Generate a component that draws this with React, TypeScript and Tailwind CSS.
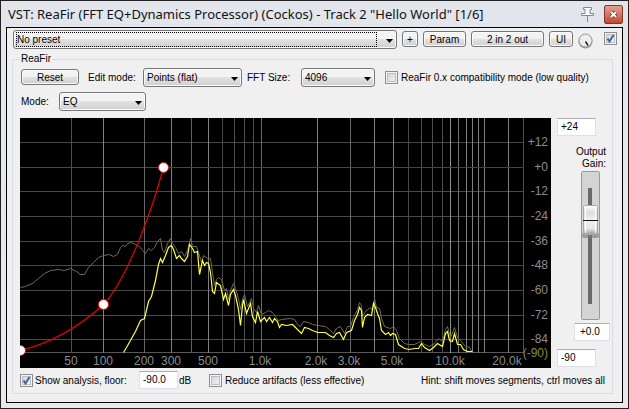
import type { ReactNode } from "react";

const FREQ_LINES: [number, string][] = [
  [71, "#505050"], [103, "#808080"], [144, "#686868"], [171, "#808080"], [191, "#606060"],
  [208, "#808080"], [222, "#484848"], [234, "#505050"], [244, "#505050"], [253, "#505050"],
  [261, "#686868"], [317, "#808080"], [350, "#686868"], [374, "#808080"], [393, "#808080"],
  [408, "#484848"], [421, "#505050"], [432, "#505050"], [442, "#505050"], [450, "#909090"],
  [458, "#707070"], [466, "#808080"], [472, "#808080"], [478, "#808080"], [484, "#808080"],
  [508, "#808080"], [523, "#505050"],
];

const FREQ_LABELS: [number, string][] = [
  [71, "50"], [103, "100"], [144, "200"], [171, "300"], [208, "500"], [260, "1.0k"],
  [316, "2.0k"], [349, "3.0k"], [392, "5.0k"], [450, "10.0k"], [507, "20.0k"],
];

const DB_LINES: [number, string][] = [
  [142, "+12"], [167, "+0"], [191, "-12"], [216, "-24"], [241, "-36"],
  [265, "-48"], [290, "-60"], [315, "-72"], [339, "-84"],
];

const PEAKS =
  "20,287 25,286 32,283 38,278 44,273 50,270 58,269 64,270 70,268 76,271 80,274 84,274 88,267 93,262 98,257 103,255 109,254 113,256 117,254 120,247 122,245 125,246 127,243 131,242 135,244 139,246 142,250 145,253 148,248 151,250 154,247 157,241 160,238 162,250 164,252 167,243 170,238 172,243 175,247 178,253 181,251 184,256 187,250 190,238 192,246 196,246 198,252 201,262 203,255 207,258 210,258 212,272 214,285 216,279 218,277 221,279 224,290 226,288 228,299 230,290 233,283 235,288 238,298 240,309 242,299 244,294 247,306 251,298 253,308 256,312 258,305 261,314 265,312 268,310 272,312 275,316 278,320 281,319 290,318 294,319 297,324 300,326 303,321 308,322 312,324 317,325 325,326 329,329 333,333 336,328 340,326 344,333 347,326 350,326 353,317 357,309 359,302 361,305 362,316 365,311 370,307 372,310 374,298 376,307 379,308 381,318 384,326 390,328 393,326 396,330 399,338 404,343 408,344 414,344 420,341 424,344 429,346 434,343 438,338 442,341 445,329 447,326 450,337 454,327 457,337 460,340 465,346 469,347 472,352 475,352";

const SPECTRUM =
  "123,352 126,347 131,338 135,331 140,320 144,318 148,301 151,296 155,280 158,264 160,258 162,262 165,255 168,247 171,245 173,249 176,258 179,255 181,258 184,261 187,256 189,244 192,248 194,252 197,251 199,274 202,260 204,265 206,262 208,263 210,272 212,291 214,293 216,282 220,285 223,299 225,293 228,305 230,294 233,289 235,295 238,309 240,325 242,305 243,299 246,313 250,303 252,316 255,322 257,311 260,321 264,317 266,321 269,317 272,322 274,318 277,321 279,327 281,324 286,325 292,324 296,328 301,333 304,327 308,328 312,330 317,332 325,332 329,335 333,337 336,333 339,332 343,339 346,332 351,330 354,320 357,314 359,307 361,310 362,327 364,317 367,314 371,315 373,303 375,307 377,313 379,318 381,330 385,334 388,332 390,335 392,333 395,334 398,344 404,348 409,349 414,348 418,348 421,343 424,347 429,350 433,347 437,343 442,346 445,333 447,331 449,340 452,341 454,333 457,344 460,344 463,349 467,351 472,351";

const raised =
  "border border-[#777] rounded-[3px] shadow-[inset_0_0_0_1px_#fafafa] bg-linear-to-b from-[#f3f3f3] from-45% via-[#e2e2e2] via-50% to-[#d0d0d0]";

function Button({ className = "", children }: { className?: string; children: ReactNode }) {
  return <button className={`${raised} h-[16px] leading-[13px] text-center ${className}`}>{children}</button>;
}

function Dropdown({ id, label, value, className = "", focused = false }: {
  id: string; label: string; value: string; className?: string; focused?: boolean;
}) {
  return (
    <div className={`relative h-[19px] ${className}`}>
      <select id={id} aria-label={label} className={`${raised} appearance-none w-full h-full pl-[3px] pr-5 leading-[15px] outline-none`}>
        <option>{value}</option>
      </select>
      {focused && <span className="absolute left-[3px] right-[20px] top-[2px] bottom-[2px] border border-dotted border-black pointer-events-none" />}
      <svg className="absolute right-[4px] top-[9px] pointer-events-none" width="7" height="4">
        <path d="M0 0h7L3.5 4z" fill="#000" />
      </svg>
    </div>
  );
}

function Check({ id, label, defaultChecked = false }: { id: string; label?: string; defaultChecked?: boolean }) {
  return (
    <span className="relative block size-[13px] shrink-0">
      <input
        id={id}
        type="checkbox"
        aria-label={label}
        defaultChecked={defaultChecked}
        className="peer appearance-none block size-[13px] border border-[#8e8f8f] shadow-[inset_0_0_0_1px_#f4f4f4,inset_0_0_0_2px_#b8bfc8] bg-linear-to-br from-[#cdd3da] to-[#f6f6f6]"
      />
      <svg className="absolute inset-0 hidden peer-checked:block pointer-events-none" viewBox="0 0 13 13">
        <path d="M3.5 6.5L5.5 9.5L9.5 3" fill="none" stroke="#4a5f97" strokeWidth="2" />
      </svg>
    </span>
  );
}

function Field({ label, value, className = "" }: { label: string; value: string; className?: string }) {
  return (
    <input
      aria-label={label}
      defaultValue={value}
      className={`h-[18px] px-[3px] pb-[2px] bg-white border border-[#dbe0ea] border-t-[#abadb3] leading-[14px] ${className}`}
    />
  );
}

function Graph() {
  return (
    <svg className="block flex-1 min-w-0 h-[250px] bg-black" viewBox="20 118 531 250" preserveAspectRatio="none">
      <g shapeRendering="crispEdges">
        {DB_LINES.map(([y]) => (
          <path key={y} d={`M20 ${y}.5H523`} stroke="#484848" />
        ))}
        <path d="M20 352.5H523" stroke="#585858" />
        {FREQ_LINES.map(([x, color]) => (
          <path key={x} d={`M${x}.5 118V353`} stroke={color} />
        ))}
      </g>
      <g fontFamily="Liberation Sans, Arial, sans-serif" fontSize="12" fill="#8c8c8c">
        {FREQ_LABELS.map(([x, text]) => (
          <text key={text} x={x} y="365" textAnchor="middle">{text}</text>
        ))}
        {DB_LINES.map(([y, text]) => (
          <text key={text} x="548" y={y + 4} textAnchor="end">{text}</text>
        ))}
        <text x="548" y="357" textAnchor="end" fill="#8c8c3c">(-90)</text>
      </g>
      <g fill="none" transform="translate(.5 .5)">
        <polyline points={PEAKS} stroke="#6e6e50" />
        <polyline points={SPECTRUM} stroke="#ffff40" strokeWidth="1.2" />
      </g>
      <path d="M20 350.5C52 343 80 326 103.500 304.500C128 278 152 210 163.500 167.500" fill="none" stroke="#e80000" strokeWidth="1.2" />
      <rect x="163" y="167" width="361" height="1" fill="#e80000" shapeRendering="crispEdges" />
      <g fill="#fff" stroke="#f00000">
        <circle cx="20.500" cy="350.500" r="5" />
        <circle cx="103.500" cy="304.500" r="5" />
        <circle cx="163.500" cy="167.500" r="5" />
      </g>
    </svg>
  );
}

function Fader() {
  return (
    <svg className="block" width="19" height="149" role="img" aria-label="Output Gain">
      <defs>
        <linearGradient id="cap" x1="0" y1="0" x2="0" y2="1">
          <stop offset="0" stopColor="#fff" />
          <stop offset=".25" stopColor="#ddd" />
          <stop offset=".5" stopColor="#f2f2f2" />
          <stop offset=".8" stopColor="#e6e6e6" />
          <stop offset="1" stopColor="#999" />
        </linearGradient>
      </defs>
      <rect x=".5" y=".5" width="18" height="148" rx="1" fill="#d4d4d4" stroke="#999" />
      <rect x="7" y="17" width="4" height="116" fill="#6a6a6a" />
      <rect x="1" y="62" width="17" height="5" rx="2" fill="#777" opacity=".6" />
      <rect x="2.500" y="34.500" width="14" height="29" rx="1" fill="url(#cap)" stroke="#aaa" />
      <path d="M4.500 36V62M14.500 36V62" stroke="#fff" />
      <path d="M2 49.500H17" stroke="#111" />
    </svg>
  );
}

export default function App() {
  return (
    <main className="border border-[#222] bg-linear-to-b from-[#e2e6ec] to-[#e9e9ec] px-[5px] pb-[5px] text-black font-['Liberation_Sans',Arial,sans-serif] text-[10px]">
      <header className="h-[26px] flex items-center pl-[2px]">
        <h1 className="flex-1 text-[13px] leading-[24px] whitespace-nowrap text-[#111] font-['Noto_Sans',sans-serif]">
          VST: ReaFir (FFT EQ+Dynamics Processor) (Cockos) - Track 2 "Hello World" [1/6]
        </h1>
        <button aria-label="Pin" className="mr-[9px]">
          <svg width="15" height="17" viewBox="0 0 15 17" fill="#fff" stroke="#888">
            <path d="M3.500 1.500h8v2h-1.500v4h3.500v2h-12v-2h3.500v-4h-1.500z" />
            <path d="M7.500 10v6" />
          </svg>
        </button>
        <button aria-label="Close" className="h-[19px] w-[19px] grid place-items-center rounded-[2px] border border-[#7d3a32] bg-linear-to-b from-[#e5a090] to-[#c8452c]">
          <svg width="9" height="9" viewBox="0 0 9 9">
            <path d="M2 2l5 5M7 2l-5 5" stroke="#444" strokeWidth="3.500" />
            <path d="M2 2l5 5M7 2l-5 5" stroke="#fff" strokeWidth="2" />
          </svg>
        </button>
      </header>

      <section className="border border-black bg-[#f0f0f0] px-[5px] pb-[8px]">
        <div className="flex items-start pt-[2px] pl-px h-[23px]">
          <Dropdown id="preset" label="Preset" value="No preset" className="flex-1" focused />
          <Button className="w-[16px] ml-[5px] mt-px">+</Button>
          <Button className="w-[43px] ml-[5px] mt-px">Param</Button>
          <Button className="w-[73px] ml-[5px] mt-px">2 in 2 out</Button>
          <Button className="w-[24px] ml-[5px] mt-px">UI</Button>
          <svg className="ml-[5px] mt-[3px]" width="15" height="16" role="img" aria-label="Wet">
            <circle cx="7.500" cy="8.500" r="7" fill="#999" />
            <circle cx="7.500" cy="7.500" r="6.500" fill="#eee" stroke="#999" />
            <path d="M7.500 8.500l2.500 4" stroke="#222" strokeWidth="1.500" />
          </svg>
          <div className="ml-[11px] mt-[2px]"><Check id="bypass" label="Enabled" defaultChecked /></div>
        </div>

        <fieldset className="border border-[#d5dfe5] rounded-[2px] pl-[7px] pr-[2px] pb-[4px] mr-[4px]">
          <legend className="ml-0 px-px h-[16px] leading-[16px]">ReaFir</legend>
          <div className="flex items-center h-[20px] pl-px">
            <Button className="w-[58px]">Reset</Button>
            <label htmlFor="edit" className="ml-[9px] w-[55px] whitespace-nowrap">Edit mode:</label>
            <Dropdown id="edit" label="Edit mode" value="Points (flat)" className="w-[99px]" />
            <label htmlFor="fft" className="ml-[5px] w-[54px] whitespace-nowrap">FFT Size:</label>
            <Dropdown id="fft" label="FFT Size" value="4096" className="w-[74px]" />
            <label htmlFor="compat" className="ml-[10px] flex items-center gap-[3px] whitespace-nowrap">
              <Check id="compat" />ReaFir 0.x compatibility mode (low quality)
            </label>
          </div>
          <div className="flex items-center h-[20px] mt-[4px] pl-px">
            <label htmlFor="mode" className="w-[38px]">Mode:</label>
            <Dropdown id="mode" label="Mode" value="EQ" className="w-[87px]" />
          </div>
          <div className="flex mt-[7px]">
            <Graph />
            <div className="w-[59px] pl-[6px] flex flex-col">
              <Field label="Top of range" value="+24" className="w-[39px]" />
              <div className="mt-[10px] mr-[4px] text-right leading-[12px]">Output<br />Gain:</div>
              <div className="mt-px ml-[24px]"><Fader /></div>
              <Field label="Output gain value" value="+0.0" className="w-[36px] mt-[3px] ml-[17px] px-[5px]" />
              <Field label="Bottom of range" value="-90" className="w-[39px] mt-[8px]" />
            </div>
          </div>
          <div className="flex items-center mt-[3px] h-[18px] whitespace-nowrap">
            <label htmlFor="analysis" className="flex items-center gap-[2px] w-[119px]">
              <Check id="analysis" defaultChecked />Show analysis, floor:
            </label>
            <Field label="Floor" value="-90.0" className="w-[39px]" />
            <span className="ml-px w-[30px]">dB</span>
            <label htmlFor="artifacts" className="flex items-center gap-[3px]">
              <Check id="artifacts" />Reduce artifacts (less effective)
            </label>
            <span className="ml-auto mr-[5px]">Hint: shift moves segments, ctrl moves all</span>
          </div>
        </fieldset>
      </section>
    </main>
  );
}
